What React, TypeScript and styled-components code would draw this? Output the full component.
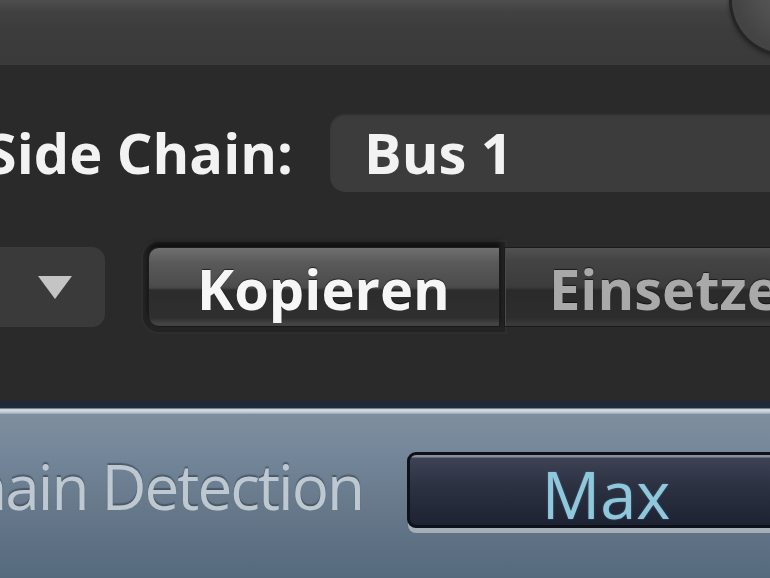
import React from "react";
import styled, { createGlobalStyle } from "styled-components";

const Global = createGlobalStyle`
  html, body { margin: 0; padding: 0; background: #2a2a2a; }
  #root { width: 770px; height: 578px; }
`;

const Screen = styled.div`
  width: 770px;
  height: 578px;
  overflow: hidden;
  display: flex;
  flex-direction: column;
  font-family: "Open Sans", "DejaVu Sans", sans-serif;
`;

const TopBar = styled.div`
  height: 65px;
  flex: none;
  display: flex;
  justify-content: flex-end;
  background: linear-gradient(#4e4e4e 0px, #414141 12px, #3c3c3c 30px, #3a3a3a 65px);
  overflow: hidden;
`;

const Knob = styled.div`
  flex: none;
  width: 106px;
  height: 106px;
  margin-top: -53px;
  margin-right: -68px;
  border-radius: 50%;
  background: radial-gradient(circle at 65% 35%, #5e5e5e 0%, #505050 45%, #444 70%);
  box-shadow: 0 0 0 3px #262626, 0 2px 4px 3px rgba(0, 0, 0, 0.35);
`;

const DarkArea = styled.div`
  height: 335px;
  flex: none;
  background: #2a2a2a;
  display: flex;
  flex-direction: column;
`;

const FieldRow = styled.div`
  display: flex;
  align-items: center;
  margin-top: 48px;
  height: 79px;
  gap: 37px;
`;

const FieldLabel = styled.div`
  flex: none;
  width: 293px;
  display: flex;
  justify-content: flex-end;
  font-size: 56px;
  font-weight: 700;
  line-height: 79px;
  color: #f2f2f2;
  white-space: nowrap;
`;

const FieldBox = styled.div`
  flex: none;
  width: 520px;
  height: 79px;
  box-sizing: border-box;
  padding-left: 34px;
  border-radius: 15px;
  background: #3c3c3c;
  box-shadow: inset 0 2px 2px rgba(0, 0, 0, 0.25);
  font-size: 56px;
  font-weight: 700;
  line-height: 79px;
  color: #f2f2f2;
  white-space: nowrap;
`;

const ButtonRow = styled.div`
  display: flex;
  align-items: center;
  margin-top: 55px;
  height: 80px;
  gap: 43px;
`;

const Dropdown = styled.div`
  flex: none;
  width: 125px;
  height: 80px;
  margin-left: -20px;
  border-radius: 13px;
  background: #3a3a3a;
  display: flex;
  align-items: center;
  padding-left: 57px;
  box-sizing: border-box;
`;

const Segmented = styled.div`
  flex: none;
  display: flex;
  height: 80px;
`;

const Segment = styled.div<{ $active?: boolean; $width: number }>`
  flex: none;
  width: ${(p) => p.$width}px;
  height: 80px;
  box-sizing: border-box;
  padding-left: ${(p) => (p.$active ? 48 : 44)}px;
  font-size: 56px;
  font-weight: 700;
  line-height: 80px;
  white-space: nowrap;
  border: 1px solid #1b1b1b;
  color: ${(p) => (p.$active ? "#f6f6f6" : "#a9a9a9")};
  border-radius: ${(p) => (p.$active ? "11px 0 0 11px" : "0")};
  background: ${(p) =>
    p.$active
      ? "linear-gradient(#707070 0px, #5a5a5a 14px, #4c4c4c 38px, #474747 40px, #2c2c2c 42px, #2f2f2f 70px, #454545 76px, #3a3a3a 80px)"
      : "linear-gradient(#525252 0px, #444 12px, #3c3c3c 38px, #383838 40px, #2a2a2a 42px, #2d2d2d 70px, #3a3a3a 76px, #333 80px)"};
  box-shadow: ${(p) =>
    p.$active
      ? "0 -5px 5px rgba(0,0,0,0.55), 0 0 0 5px #232323, 0 0 0 7px #2e2e2e"
      : "inset 1px 0 0 #4a4a4a"};
  text-shadow: 0 -1px 1px rgba(0, 0, 0, 0.6);
  margin-left: ${(p) => (p.$active ? 0 : 4)}px;
`;

const Divider = styled.div`
  flex: none;
  height: 14px;
  background: linear-gradient(#2a2a2a 0px, #1d2836 2px, #1f2c3b 8px, #c9d2da 9px, #d2dae2 11px, #9aa7b4 14px);
`;

const BluePanel = styled.div`
  flex: 1;
  background: linear-gradient(#7f8e9d 0px, #74879a 40px, #67798b 90px, #566a7e 164px);
  display: flex;
  flex-direction: column;
`;

const ParamRow = styled.div`
  display: flex;
  align-items: center;
  margin-top: 38px;
  height: 76px;
  gap: 44px;
`;

const ParamLabel = styled.div`
  flex: none;
  width: 363px;
  height: 76px;
  display: flex;
  justify-content: flex-end;
  font-size: 62px;
  letter-spacing: -2px;
  line-height: 68px;
  color: #bec8d0;
  text-shadow: 0 -2px 1px rgba(45, 58, 72, 0.55);
  white-space: nowrap;
`;

const ValueButton = styled.div`
  flex: none;
  width: 398px;
  height: 76px;
  box-sizing: border-box;
  border: 3px solid #0d1119;
  border-radius: 9px;
  background: linear-gradient(#8a8f9a 0px, #8a8f9a 2px, #3d4354 3px, #2c3242 30px, #1c2232 72px);
  box-shadow: 0 6px 0 -1px #a6afb8;
  text-align: center;
  font-size: 65px;
  line-height: 76px;
  padding-top: 1px;
  color: #8fc8dc;
  text-shadow: 0 0 2px rgba(140, 200, 220, 0.35);
  white-space: nowrap;
`;

const Triangle = () => (
  <svg width="36" height="26" viewBox="0 0 36 26">
    <polygon points="1,2 35,2 18,25" fill="#c4c4c4" />
  </svg>
);

export default function App() {
  return (
    <>
      <Global />
      <Screen>
        <TopBar>
          <Knob />
        </TopBar>
        <DarkArea>
          <FieldRow>
            <FieldLabel>
              <span>Side Chain:</span>
            </FieldLabel>
            <FieldBox>Bus 1</FieldBox>
          </FieldRow>
          <ButtonRow>
            <Dropdown>
              <Triangle />
            </Dropdown>
            <Segmented>
              <Segment $active $width={352}>Kopieren</Segment>
              <Segment $width={300}>Einsetzen</Segment>
            </Segmented>
          </ButtonRow>
        </DarkArea>
        <Divider />
        <BluePanel>
          <ParamRow>
            <ParamLabel>
              <span>Side Chain Detection</span>
            </ParamLabel>
            <ValueButton>Max</ValueButton>
          </ParamRow>
        </BluePanel>
      </Screen>
    </>
  );
}
